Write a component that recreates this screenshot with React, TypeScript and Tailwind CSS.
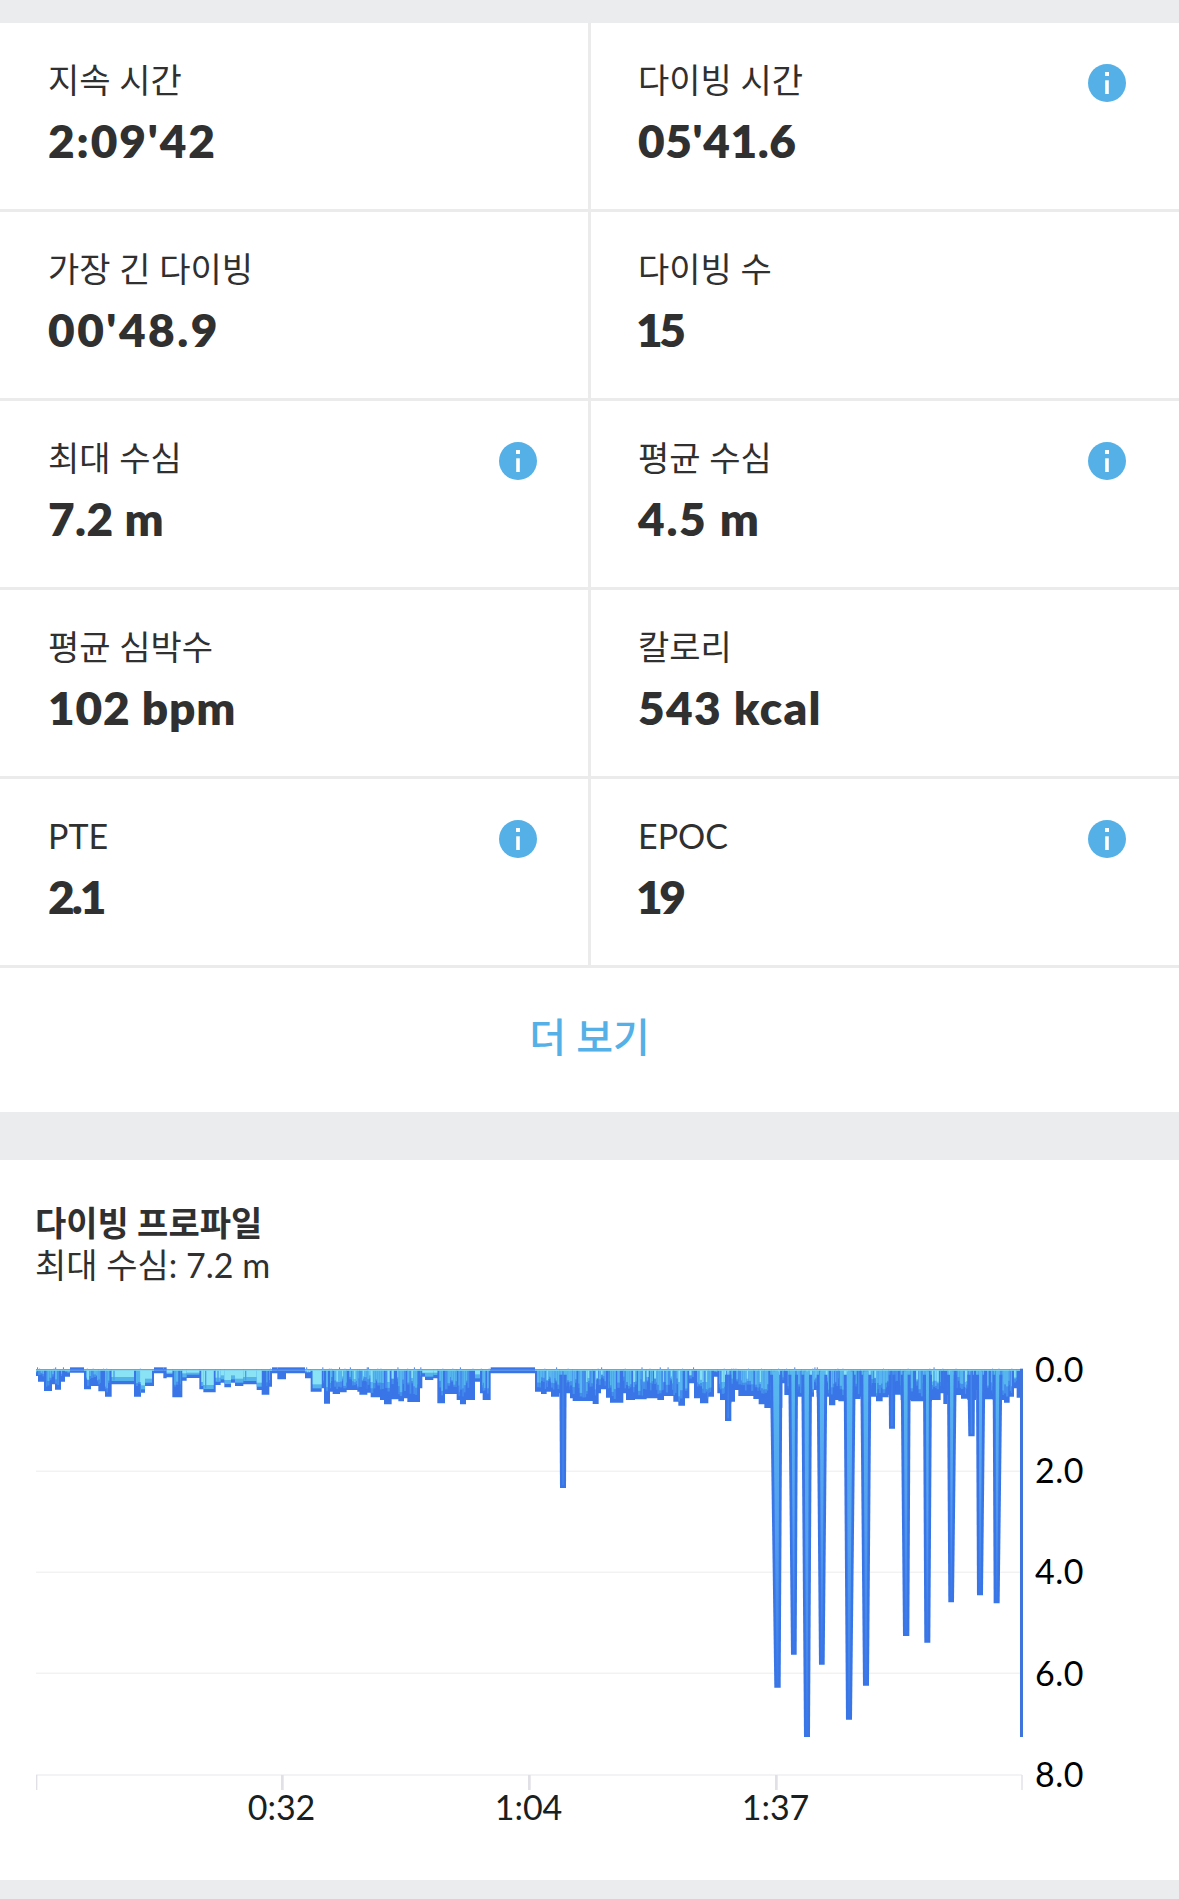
import React from 'react';
import clsx from 'clsx';

interface Stat {
  label: string;
  value: string;
  info?: boolean;
  tracking?: string;
}

const stats: Stat[] = [
  { label: '지속 시간', value: "2:09'42", tracking: 'tracking-[1.9px]' },
  { label: '다이빙 시간', value: "05'41.6", info: true, tracking: 'tracking-[0.6px]' },
  { label: '가장 긴 다이빙', value: "00'48.9", tracking: 'tracking-[2.5px]' },
  { label: '다이빙 수', value: '15', tracking: 'tracking-[-3.5px] -ml-0.5' },
  { label: '최대 수심', value: '7.2 m', info: true, tracking: 'tracking-[0.4px]' },
  { label: '평균 수심', value: '4.5 m', info: true, tracking: 'tracking-[1.7px]' },
  { label: '평균 심박수', value: '102 bpm', tracking: 'tracking-[0.8px]' },
  { label: '칼로리', value: '543 kcal', tracking: 'tracking-[1.3px]' },
  { label: 'PTE', value: '2.1', info: true, tracking: 'tracking-[-3px]' },
  { label: 'EPOC', value: '19', info: true, tracking: 'tracking-[-3.5px] -ml-0.5' },
];

// Surface profile as [end x, depth, tone] runs, in thirds of a pixel.
// tone: 0 flat, 1 noisy, 2 calm
const surface: [number, number, number][] = [
  [6, 18, 1], [24, 35, 1], [48, 63, 1], [57, 43, 1], [75, 59, 1], [87, 35, 1], [102, 20, 1],
  [144, 8, 0], [165, 58, 1], [187, 48, 1], [207, 64, 1], [227, 80, 1], [294, 43, 2], [315, 80, 1],
  [327, 68, 2], [354, 48, 2], [382, 10, 0], [392, 25, 0], [409, 22, 2], [439, 82, 1], [452, 32, 2],
  [490, 24, 2], [502, 58, 2], [539, 67, 2], [554, 45, 2], [565, 38, 2], [585, 52, 2], [597, 38, 2],
  [622, 48, 2], [662, 43, 2], [677, 60, 2], [700, 74, 1], [708, 50, 1], [724, 10, 0], [750, 28, 0],
  [807, 10, 0], [824, 25, 1], [857, 65, 2], [864, 55, 1], [882, 101, 1], [890, 65, 1], [912, 72, 1],
  [932, 67, 1], [964, 60, 1], [970, 65, 1], [994, 74, 1], [1004, 68, 1], [1032, 82, 1], [1044, 90, 1],
  [1067, 103, 1], [1087, 88, 1], [1104, 94, 1], [1114, 85, 1], [1152, 96, 1], [1159, 55, 1],
  [1167, 20, 2], [1192, 30, 2], [1204, 25, 2], [1227, 100, 1], [1262, 72, 1], [1272, 90, 1],
  [1290, 103, 1], [1317, 90, 1], [1332, 35, 2], [1340, 70, 1], [1364, 90, 1], [1497, 10, 0],
  [1515, 65, 1], [1532, 72, 1], [1545, 65, 1], [1570, 80, 1], [1602, 70, 1], [1610, 85, 1],
  [1670, 93, 1], [1688, 102, 1], [1695, 70, 1], [1710, 58, 1], [1722, 83, 1], [1762, 98, 1],
  [1770, 70, 1], [1797, 90, 1], [1832, 88, 1], [1864, 85, 1], [1884, 90, 1], [1912, 78, 1],
  [1927, 95, 1], [1947, 107, 1], [1960, 85, 1], [1974, 40, 1], [1992, 85, 1], [2017, 100, 1],
  [2034, 80, 1], [2044, 20, 1], [2052, 70, 1], [2067, 90, 1], [2086, 100, 1], [2097, 95, 1],
  [2107, 60, 1], [2152, 78, 1], [2168, 87, 1], [2185, 103, 1], [2206, 114, 1], [2239, 114, 1],
  [2245, 40, 1], [2260, 75, 1], [2297, 80, 1], [2334, 80, 1], [2342, 60, 1], [2379, 80, 1],
  [2398, 106, 1], [2407, 90, 1], [2424, 94, 1], [2474, 87, 1], [2520, 80, 1], [2540, 94, 1],
  [2558, 82, 1], [2594, 74, 1], [2624, 90, 1], [2688, 94, 1], [2714, 90, 1], [2722, 70, 1],
  [2734, 102, 1], [2775, 75, 1], [2794, 86, 1], [2820, 90, 1], [2847, 60, 1], [2870, 88, 1],
  [2904, 90, 1], [2921, 98, 1], [2934, 80, 1], [2942, 55, 1], [2952, 83, 1],
];

// Dives below the surface band: [top left, top right, bottom left, bottom right, depth]
const dives: [number, number, number, number, number][] = [
  [1570, 1592, 1572, 1590, 354],
  [2067, 2086, 2067, 2086, 153],
  [2202, 2239, 2215, 2234, 953],
  [2257, 2286, 2265, 2282, 854],
  [2296, 2328, 2304, 2322, 1101],
  [2342, 2374, 2349, 2366, 884],
  [2423, 2459, 2430, 2448, 1049],
  [2473, 2506, 2481, 2499, 947],
  [2558, 2578, 2559, 2577, 176],
  [2594, 2624, 2601, 2620, 798],
  [2661, 2688, 2665, 2683, 818],
  [2733, 2762, 2737, 2754, 697],
  [2794, 2817, 2797, 2816, 199],
  [2820, 2848, 2823, 2841, 676],
  [2870, 2899, 2873, 2891, 700],
];

const surfacePath =
  'M0 -8' + surface.map(([x, d], i) => `L${i ? surface[i - 1][0] : 0} ${d}H${x}`).join('') + 'V-3H0Z';

// Small seeded generator so the texture is the same on every render
const createRandom = (seed: number) => () => {
  seed = (seed * 16807) % 2147483647;
  return seed / 2147483647;
};

const buildTexture = () => {
  const rand = createRandom(4211);
  const bars: { x: number; w: number; h: number; fill: string }[] = [];
  const ticks: { x: number; w: number; h: number }[] = [];
  let start = 0;
  surface.forEach(([end, depth, tone], i) => {
    const prev = surface[i - 1]?.[1] ?? 0;
    const next = surface[i + 1]?.[1] ?? 0;
    const from = prev < depth - 20 ? start + 6 : start;
    const to = next < depth - 20 ? end - 6 : end;
    if (tone === 2) {
      if (to > from) {
        bars.push({ x: from, w: to - from, h: depth - 10, fill: '#55b3ec' });
        bars.push({ x: from, w: to - from, h: Math.max(8, depth - 22), fill: '#8ae3f5' });
      }
      if (rand() > 0.6) bars.push({ x: from + 5, w: 4, h: depth - 12, fill: '#4a9bed' });
    }
    if (tone === 1) {
      for (let x = from; x < to; ) {
        const w = 3 + rand() * 5;
        const h = (depth - 10) * (0.45 + rand() * 0.55);
        const k = rand();
        const width = Math.min(w, to - x);
        if (k > 0.16 && h > 3) {
          bars.push({ x, w: width, h, fill: '#4590ec' });
          if (k > 0.34) bars.push({ x, w: width, h: h * (0.6 + rand() * 0.3), fill: '#57b6ee' });
        }
        if (k > 0.88) bars.push({ x, w: 6, h: Math.min(h * 0.6, 36), fill: '#86e0f4' });
        x += w;
      }
      if (rand() > 0.35) ticks.push({ x: start + rand() * (end - start), w: 3, h: rand() > 0.6 ? 8 : 4 });
    }
    start = end;
  });
  return { bars, ticks };
};

const { bars, ticks } = buildTexture();

const InfoIcon: React.FC = () => (
  <svg viewBox="0 0 38 38" className="h-[38px] w-[38px] shrink-0">
    <circle cx="19" cy="19" r="19" fill="#54b0e6" />
    <rect x="17" y="8" width="4" height="4" fill="#fff" />
    <rect x="17.2" y="16.3" width="3.6" height="13.7" fill="#fff" />
  </svg>
);

const StatCell: React.FC<{ stat: Stat; left: boolean }> = ({ stat, left }) => (
  <div
    className={clsx(
      'flex h-[189px] items-start justify-between border-b-[3px] border-[#ebebec] pt-8',
      left ? 'border-r-[3px] pr-[51px] pl-12' : 'pr-[53px] pl-[47px]'
    )}
  >
    <div className="flex flex-col text-[#303030]">
      <span className="h-[54px] text-[34px] leading-[50px] font-normal whitespace-nowrap">{stat.label}</span>
      <span className={clsx('h-[64px] text-[46px] leading-[64px] font-extrabold whitespace-nowrap', stat.tracking)}>
        {stat.value}
      </span>
    </div>
    {stat.info && (
      <div className="pt-[9px]">
        <InfoIcon />
      </div>
    )}
  </div>
);

const DiveChart: React.FC = () => (
  <svg viewBox="-18 -60 2985 1325" className="block h-[441.67px] w-[995px] shrink-0">
    <defs>
      <linearGradient id="water" x1="0" y1="0" x2="0" y2="1">
        <stop offset="0" stopColor="#58b9ef" />
        <stop offset="0.5" stopColor="#539ff0" />
        <stop offset="1" stopColor="#3b78e7" />
      </linearGradient>
    </defs>
    {[304, 607, 910].map(y => (
      <rect key={y} x="0" y={y - 2} width="2956" height="3" fill="#ececed" />
    ))}
    <rect x="0" y="1212" width="2958" height="6" fill="#f3f3f5" />
    {[735, 1476, 2217].map(x => (
      <rect key={x} x={x} y="1215" width="8" height="45" fill="#e0e0e6" />
    ))}
    <rect x="0" y="1215" width="4" height="45" fill="#e0e0e6" />
    <rect x="2956" y="1215" width="4" height="45" fill="#e0e0e6" />

    <path d={surfacePath} fill="#3975e6" />
    {bars.map((b, i) => (
      <rect key={i} x={b.x} y="0" width={b.w} height={b.h} fill={b.fill} />
    ))}
    {dives.map(([a, b, c, d, depth]) => (
      <g key={a}>
        <path d={`M${a} 14L${c} ${depth}H${d}L${b} 14Z`} fill="#3975e6" />
        <path
          d={`M${a + 9} 4L${c + 7} ${depth - 8}H${d - 7}L${b - 9} 4Z`}
          fill={depth < 400 ? '#4387ea' : 'url(#water)'}
        />
      </g>
    ))}
    {ticks.map((t, i) => (
      <rect key={i} x={t.x} y={-t.h} width={t.w} height={t.h} fill="#4a83e4" />
    ))}
    {surface.map(([x, , tone], i) => {
      const from = i ? surface[i - 1][0] : 0;
      return tone === 0 ? (
        <g key={x}>
          <rect x={from} y="-8" width={x - from} height="10" fill="#3975e6" />
          <rect x={from} y="-1" width={x - from} height="3" fill="#6aa5ef" />
        </g>
      ) : (
        <rect key={x} x={from} y="-2" width={x - from} height="5" fill="#7fd6ee" opacity="0.8" />
      );
    })}
    <rect x="2952" y="-4" width="9" height="1105" fill="#3f74dc" />
  </svg>
);

const App: React.FC = () => (
  <div className="flex h-[1899px] w-[1179px] flex-col overflow-hidden bg-[#ebeced] font-[Lato,'Noto_Sans_CJK_KR',sans-serif]">
    <section className="mt-[23px] h-[1089px] shrink-0 bg-white">
      <div className="grid grid-cols-[591px_588px]">
        {stats.map((stat, i) => (
          <StatCell key={stat.label} stat={stat} left={i % 2 === 0} />
        ))}
      </div>
      <button className="flex h-[144px] w-full items-center justify-center pb-1.5 text-[40px] font-medium text-[#54b0e6]">
        더 보기
      </button>
    </section>

    <section className="mt-12 h-[720px] shrink-0 bg-white pt-[42px]">
      <div className="flex flex-col pl-[35px] text-[34px] leading-[42px] text-[#303030]">
        <h2 className="font-bold">다이빙 프로파일</h2>
        <p className="font-normal">최대 수심: 7.2 m</p>
      </div>
      <div className="mt-16 flex h-[442px] pl-[30px]">
        <DiveChart />
        <div className="-mt-px flex flex-col pl-2.5 text-[34px] text-black">
          {['0.0', '2.0', '4.0', '6.0', '8.0'].map(v => (
            <span key={v} className="h-[101.2px] shrink-0 leading-[40px] tracking-[0.5px]">
              {v}
            </span>
          ))}
        </div>
      </div>
      <div className="-mt-[5px] flex pl-[158px] text-[34px] leading-[40px] text-[#182022]">
        {['0:32', '1:04', '1:37'].map(v => (
          <span key={v} className="w-[247px] text-center">
            {v}
          </span>
        ))}
      </div>
    </section>
  </div>
);

export default App;
